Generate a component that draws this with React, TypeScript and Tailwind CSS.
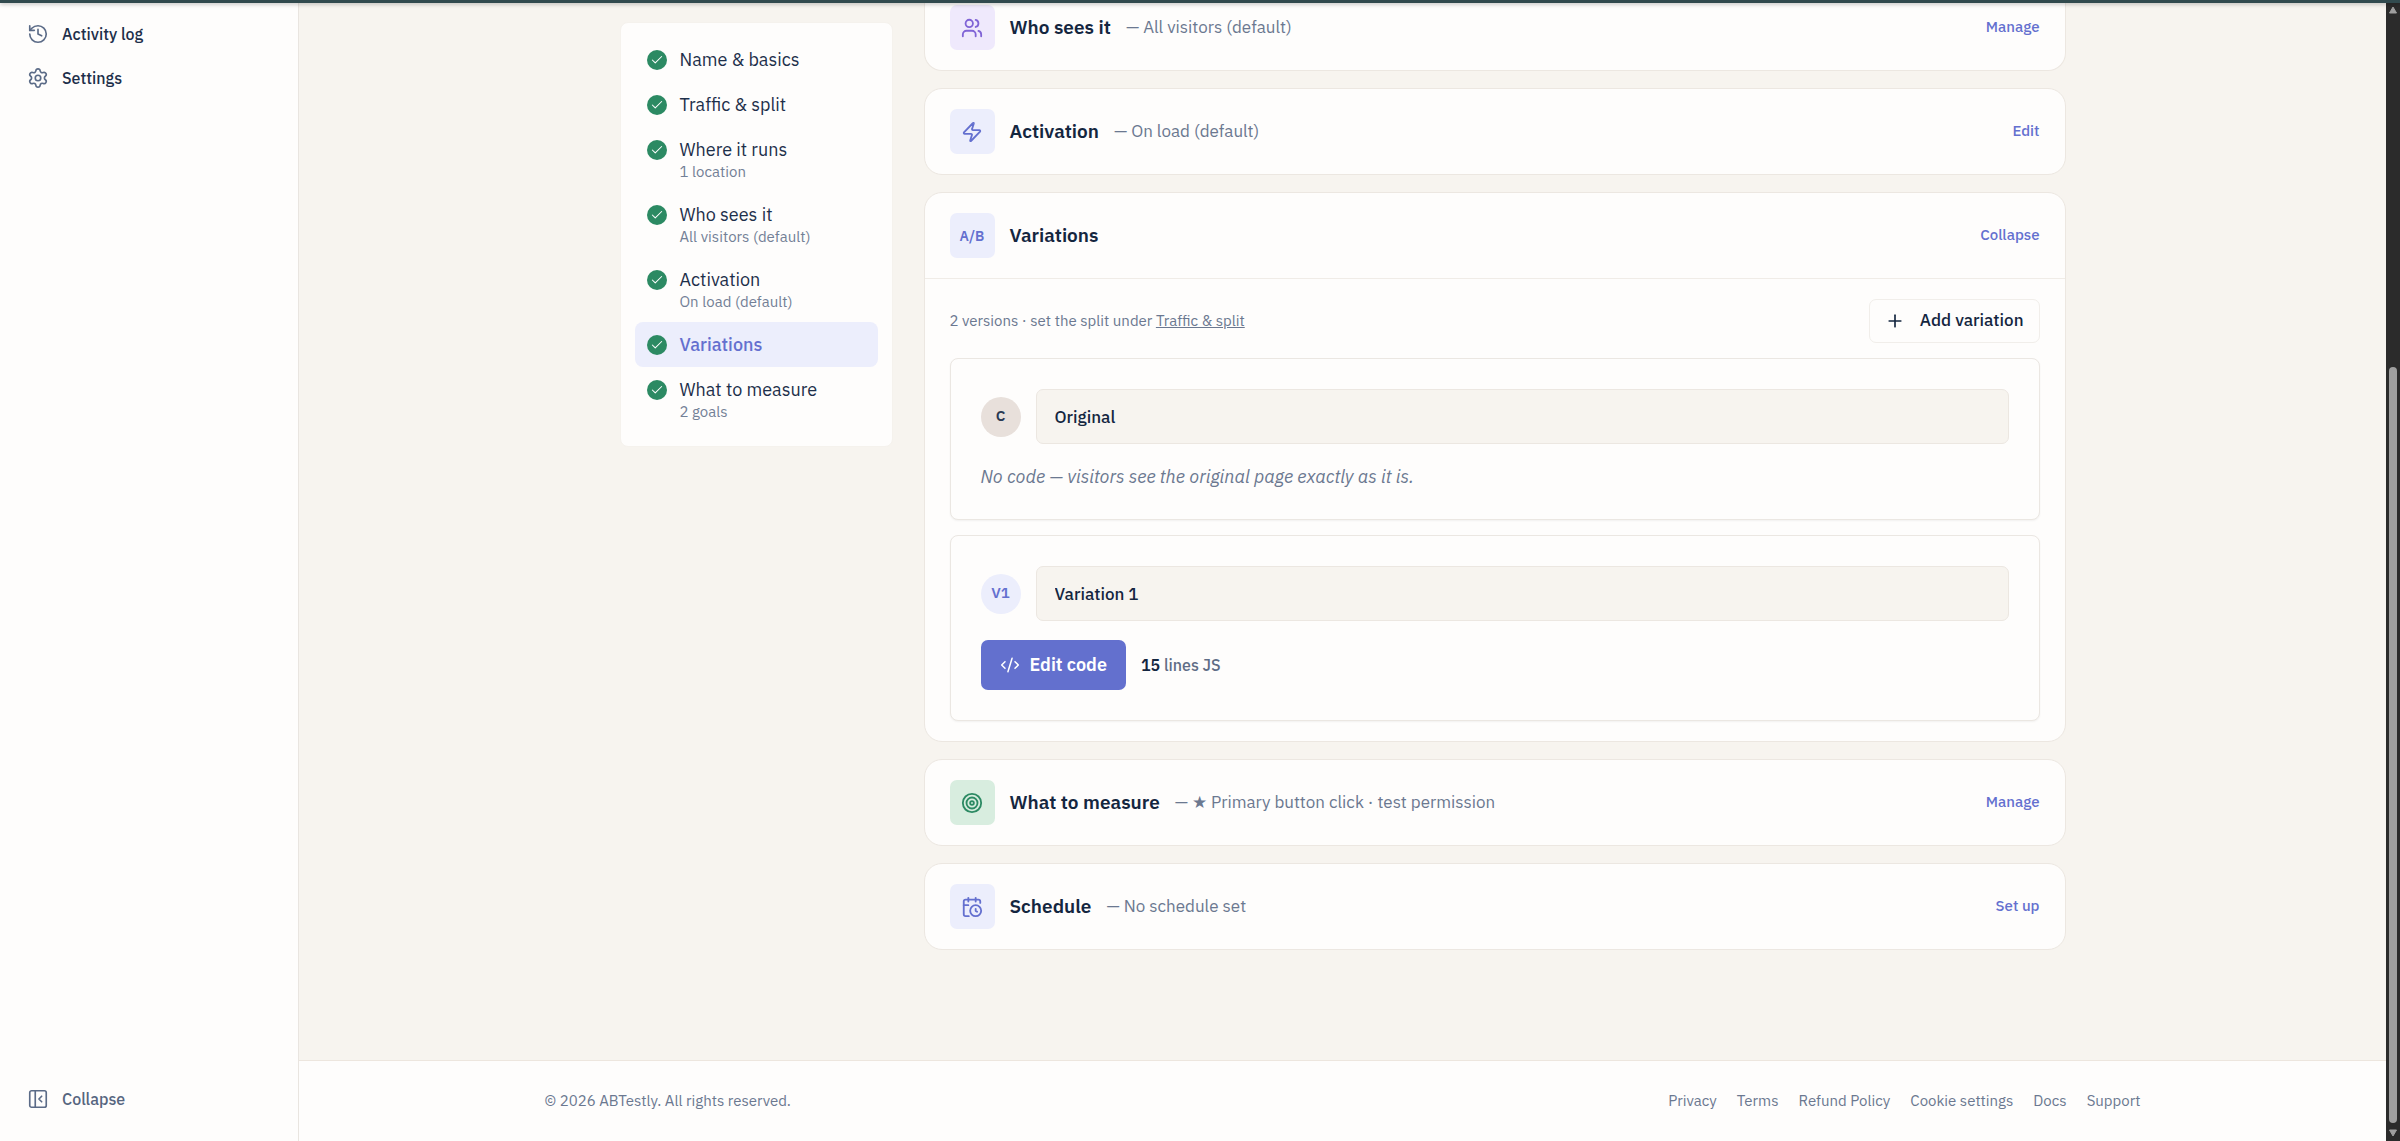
import type { LucideIcon } from "lucide-react";
import {
  CalendarClock,
  Check,
  CodeXml,
  History,
  PanelLeftClose,
  Plus,
  Settings,
  Target,
  Users,
  Zap,
} from "lucide-react";
import clsx from "clsx";

const steps = [
  { title: "Name & basics" },
  { title: "Traffic & split" },
  { title: "Where it runs", note: "1 location" },
  { title: "Who sees it", note: "All visitors (default)" },
  { title: "Activation", note: "On load (default)" },
  { title: "Variations", active: true },
  { title: "What to measure", note: "2 goals" },
];

const footerLinks = ["Privacy", "Terms", "Refund Policy", "Cookie settings", "Docs", "Support"];

const SidebarItem = ({ icon: Icon, label, muted }: { icon: LucideIcon; label: string; muted?: boolean }) => (
  <button
    type="button"
    className={clsx(
      "flex h-11 w-full items-center gap-[13px] px-[27px] text-left text-base font-medium",
      muted ? "text-[#56657f]" : "text-[#1d2f4a]"
    )}
  >
    <Icon className="size-[22px] text-[#5b6b87]" strokeWidth={1.8} />
    {label}
  </button>
);

const Sidebar = () => (
  <aside className="flex w-[299px] shrink-0 flex-col justify-between border-r border-[#e9e5e0] bg-[#fefdfc] pt-3 pb-5">
    <nav>
      <SidebarItem icon={History} label="Activity log" />
      <SidebarItem icon={Settings} label="Settings" />
    </nav>
    <SidebarItem icon={PanelLeftClose} label="Collapse" muted />
  </aside>
);

const StepNav = () => (
  <nav className="w-[273px] shrink-0 self-start rounded-lg border border-[#f5f2ed] bg-[#fefdfc] p-3.5">
    {steps.map((step) => (
      <a
        key={step.title}
        href="#"
        className={clsx("flex gap-[13px] rounded-lg px-3 py-2.5", step.active && "bg-[#eceefc]")}
      >
        <span className="mt-[3px] flex size-5 shrink-0 items-center justify-center rounded-full bg-[#2c8a63]">
          <Check className="size-3.5 text-white" strokeWidth={1.8} />
        </span>
        <span>
          <span
            className={clsx(
              "block text-lg leading-[25px]",
              step.active ? "font-medium text-[#6470cf]" : "text-[#1d2f4a]"
            )}
          >
            {step.title}
          </span>
          {step.note && <span className="block text-[15px] leading-5 text-[#738096]">{step.note}</span>}
        </span>
      </a>
    ))}
  </nav>
);

type HeaderProps = {
  icon: React.ReactNode;
  tile: string;
  title: string;
  summary?: string;
  action: string;
};

const SectionHeader = ({ icon, tile, title, summary, action }: HeaderProps) => (
  <div className="flex items-center gap-[15px]">
    <span className={clsx("flex size-[45px] items-center justify-center rounded-[7px]", tile)}>{icon}</span>
    <h2 className="text-[19px] font-semibold text-[#14263f]">{title}</h2>
    {summary && <p className="text-[17px] text-[#6b7890]">{summary}</p>}
    <button type="button" className="ml-auto text-[15px] font-medium text-[#6470cf]">
      {action}
    </button>
  </div>
);

const card = "rounded-[18px] border border-[#ece7e1] bg-[#fefdfc]";

const Variation = ({
  badge,
  badgeStyle,
  name,
  children,
}: {
  badge: string;
  badgeStyle: string;
  name: string;
  children: React.ReactNode;
}) => (
  <div className="rounded-lg border border-[#ebe7e2] bg-[#fefdfc] p-[30px] shadow-xs">
    <div className="flex items-center gap-[15px]">
      <span
        className={clsx(
          "flex size-10 shrink-0 items-center justify-center rounded-full text-[15px] font-semibold",
          badgeStyle
        )}
      >
        {badge}
      </span>
      <input
        type="text"
        defaultValue={name}
        aria-label={`${badge} name`}
        className="h-[55px] min-w-0 flex-1 rounded-[7px] border border-[#ece7e1] bg-[#f7f4ef] px-[18px] text-[17px] font-medium text-[#14263f]"
      />
    </div>
    {children}
  </div>
);

const VariationsBody = () => (
  <div className="border-t border-[#f0ece7] px-[25px] py-5">
    <div className="mb-[15px] flex items-center justify-between">
      <p className="text-[15px] text-[#6b7890]">
        2 versions · set the split under{" "}
        <a href="#" className="underline">
          Traffic &amp; split
        </a>
      </p>
      <button
        type="button"
        className="flex h-11 items-center gap-[15px] rounded-[7px] border border-[#f1eeea] px-[15px] text-[17px] font-medium text-[#14263f]"
      >
        <Plus className="size-5" strokeWidth={2} />
        Add variation
      </button>
    </div>
    <div className="flex flex-col gap-[15px]">
      <Variation badge="C" badgeStyle="bg-[#e8e0db] text-[#2b3b54]" name="Original">
        <p className="mt-5 text-lg leading-[25px] text-[#6b7890] italic">
          No code — visitors see the original page exactly as it is.
        </p>
      </Variation>
      <Variation badge="V1" badgeStyle="bg-[#eceefc] text-[#6470cf]" name="Variation 1">
        <div className="mt-[19px] flex items-center gap-[15px]">
          <button
            type="button"
            className="flex h-[50px] items-center gap-2.5 rounded-[7px] bg-[#6370ce] px-[19px] text-lg font-semibold text-white"
          >
            <CodeXml className="size-5" strokeWidth={1.8} />
            Edit code
          </button>
          <p className="text-base font-medium text-[#5f6d86]">
            <strong className="font-semibold text-[#14263f]">15</strong> lines JS
          </p>
        </div>
      </Variation>
    </div>
  </div>
);

// Classic window scrollbar on the right edge
const ScrollTrack = () => (
  <div className="flex w-3.5 shrink-0 flex-col items-center bg-[#2b2b2b] pt-1.5 pb-1" aria-hidden="true">
    <svg className="h-2 w-2" viewBox="0 0 8 8">
      <path d="M4 1 7.5 7h-7z" fill="#9f9f9f" stroke="#9f9f9f" strokeLinejoin="round" />
    </svg>
    <div className="basis-[353px]" />
    <div className="w-2 flex-1 rounded-full bg-[#9f9f9f]" />
    <svg className="mt-1.5 h-2 w-2" viewBox="0 0 8 8">
      <path d="M4 7 .5 1h7z" fill="#9f9f9f" stroke="#9f9f9f" strokeLinejoin="round" />
    </svg>
  </div>
);

const App = () => (
  <div className="relative flex min-h-screen bg-[#f7f4ef] font-['IBM_Plex_Sans',Roboto,sans-serif]">
    <div className="absolute inset-x-0 top-0 h-[3px] bg-[#314a4e] shadow-[0_1px_4px_rgba(0,0,0,0.3)]" />
    <Sidebar />

    <div className="flex min-w-0 flex-1 flex-col">
      <main className="mx-auto flex w-full max-w-[1446px] flex-1 gap-[31px]">
        <div className="pt-[22px]">
          <StepNav />
        </div>
        <div className="flex flex-1 flex-col gap-[17px] pb-20">
          {/* first section is scrolled partly under the top edge */}
          <section className="rounded-b-[18px] border border-t-0 border-[#ece7e1] bg-[#fefdfc] px-[25px] pt-[5px] pb-5">
            <SectionHeader
              icon={<Users className="size-[22px]" strokeWidth={2} />}
              tile="bg-[#efe9fc] text-[#8064d6]"
              title="Who sees it"
              summary="— All visitors (default)"
              action="Manage"
            />
          </section>

          <section className={clsx(card, "px-[25px] py-5")}>
            <SectionHeader
              icon={<Zap className="size-[22px]" strokeWidth={2} />}
              tile="bg-[#eceefc] text-[#6470cf]"
              title="Activation"
              summary="— On load (default)"
              action="Edit"
            />
          </section>

          <section className={card}>
            <div className="px-[25px] py-5">
              <SectionHeader
                icon={<span className="text-sm font-semibold">A/B</span>}
                tile="bg-[#eceefc] text-[#6470cf]"
                title="Variations"
                action="Collapse"
              />
            </div>
            <VariationsBody />
          </section>

          <section className={clsx(card, "px-[25px] py-5")}>
            <SectionHeader
              icon={<Target className="size-[22px]" strokeWidth={2} />}
              tile="bg-[#d8eddf] text-[#2c8a63]"
              title="What to measure"
              summary="— ★ Primary button click · test permission"
              action="Manage"
            />
          </section>

          <section className={clsx(card, "px-[25px] py-5")}>
            <SectionHeader
              icon={<CalendarClock className="size-[22px]" strokeWidth={2} />}
              tile="bg-[#eceefc] text-[#6470cf]"
              title="Schedule"
              summary="— No schedule set"
              action="Set up"
            />
          </section>
        </div>
      </main>

      <footer className="border-t border-[#ede6de] bg-[#fefdfc]">
        <div className="mx-auto flex h-20 w-full max-w-[1596px] items-center justify-between text-[15px] text-[#6b7890]">
          <p>© 2026 ABTestly. All rights reserved.</p>
          <nav className="flex gap-5">
            {footerLinks.map((link) => (
              <a key={link} href="#">
                {link}
              </a>
            ))}
          </nav>
        </div>
      </footer>
    </div>

    <ScrollTrack />
  </div>
);

export default App;
